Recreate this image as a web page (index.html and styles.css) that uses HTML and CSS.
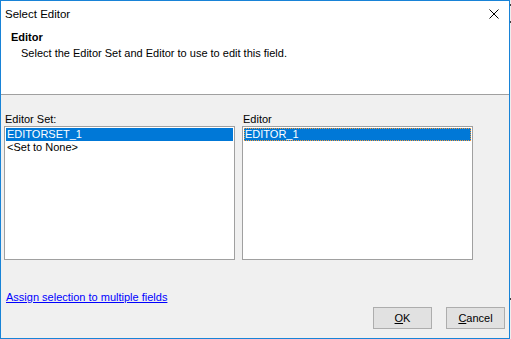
FILE: index.html
```html
<!DOCTYPE html>
<html>
<head>
<meta charset="utf-8">
<link rel="stylesheet" href="styles.css">
</head>
<body>
<div class="window">
  <div class="titlebar">
    <span class="title">Select Editor</span>
    <span class="close" aria-label="Close">
      <svg width="10" height="10" viewBox="0 0 10 10"><path d="M0.5 0.5 L9.5 9.5 M9.5 0.5 L0.5 9.5" stroke="#000" stroke-width="1" fill="none"/></svg>
    </span>
  </div>
  <div class="header">
    <div class="h-title">Editor</div>
    <div class="h-desc">Select the Editor Set and Editor to use to edit this field.</div>
  </div>
  <div class="content">
    <div class="lists">
      <div class="col">
        <div class="label">Editor Set:</div>
        <div class="listbox">
          <div class="item selected">EDITORSET_1</div>
          <div class="item">&lt;Set to None&gt;</div>
        </div>
      </div>
      <div class="col">
        <div class="label">Editor</div>
        <div class="listbox">
          <div class="item selected focused">EDITOR_1</div>
        </div>
      </div>
    </div>
    <a class="link" href="#">Assign selection to multiple fields</a>
    <div class="buttons">
      <button class="btn"><u>O</u>K</button>
      <button class="btn"><u>C</u>ancel</button>
    </div>
  </div>
</div>
<div class="behind">
  <span class="mark m1"></span>
  <span class="mark m2"></span>
  <span class="mark m3"></span>
</div>
</body>
</html>
```

FILE: styles.css
```css
html, body {
  margin: 0;
  padding: 0;
}
body {
  background: #eeeeee;
  width: 511px;
  height: 339px;
  overflow: hidden;
  position: relative;
  font-family: "Liberation Sans", Arial, sans-serif;
  font-size: 11px;
  color: #000;
}
.window {
  width: 508px;
  height: 337px;
  border: 1px solid #1883d7;
  background: #f0f0f0;
  display: flex;
  flex-direction: column;
}
.titlebar {
  height: 29px;
  background: #fff;
  display: flex;
  align-items: flex-start;
  box-sizing: border-box;
}
.title {
  font-size: 11.5px;
  line-height: 16px;
  margin-top: 5px;
  margin-left: 4px;
}
.close {
  margin-left: auto;
  margin-right: 10px;
  margin-top: 8px;
  width: 10px;
  height: 10px;
  display: block;
}
.close svg { display: block; }
.header {
  background: #fff;
  height: 64px;
  border-bottom: 1px solid #a0a0a0;
}
.h-title {
  font-weight: bold;
  line-height: 15px;
  padding-left: 10px;
}
.h-desc {
  line-height: 15px;
  margin-top: 1px;
  padding-left: 20px;
}
.content {
  flex: 1;
  padding: 18px 0 0 3px;
  display: flex;
  flex-direction: column;
}
.lists {
  display: grid;
  grid-template-columns: 231px 231px;
  column-gap: 7px;
}
.label {
  line-height: 13px;
  padding-left: 1px;
}
.listbox {
  height: 130px;
  border: 1px solid #a0a0a0;
  background: #fff;
  padding: 1px;
}
.item {
  height: 13px;
  line-height: 13px;
  padding-left: 1px;
  white-space: nowrap;
  overflow: hidden;
}
.selected {
  background: #0078d7;
  color: #fff;
}
.focused {
  outline: 1px dotted #f29a3c;
  outline-offset: -1px;
}
.link {
  margin-top: 30px;
  margin-left: 2px;
  align-self: flex-start;
  line-height: 14px;
  color: #0000ff;
  text-decoration: underline;
}
.buttons {
  display: flex;
  justify-content: flex-end;
  gap: 14px;
  margin-top: 3px;
  padding-right: 4px;
}
.btn {
  width: 59px;
  height: 22px;
  background: #e1e1e1;
  border: 1px solid #adadad;
  font-family: inherit;
  font-size: 11px;
  padding: 0;
  color: #000;
}
.btn u {
  text-decoration: underline;
}
.behind .mark {
  position: absolute;
  left: 510px;
  width: 1px;
  height: 2px;
  background: #404040;
}
.m1 { top: 4px; }
.m2 { top: 21px; }
.m3 { top: 298px; }
```
